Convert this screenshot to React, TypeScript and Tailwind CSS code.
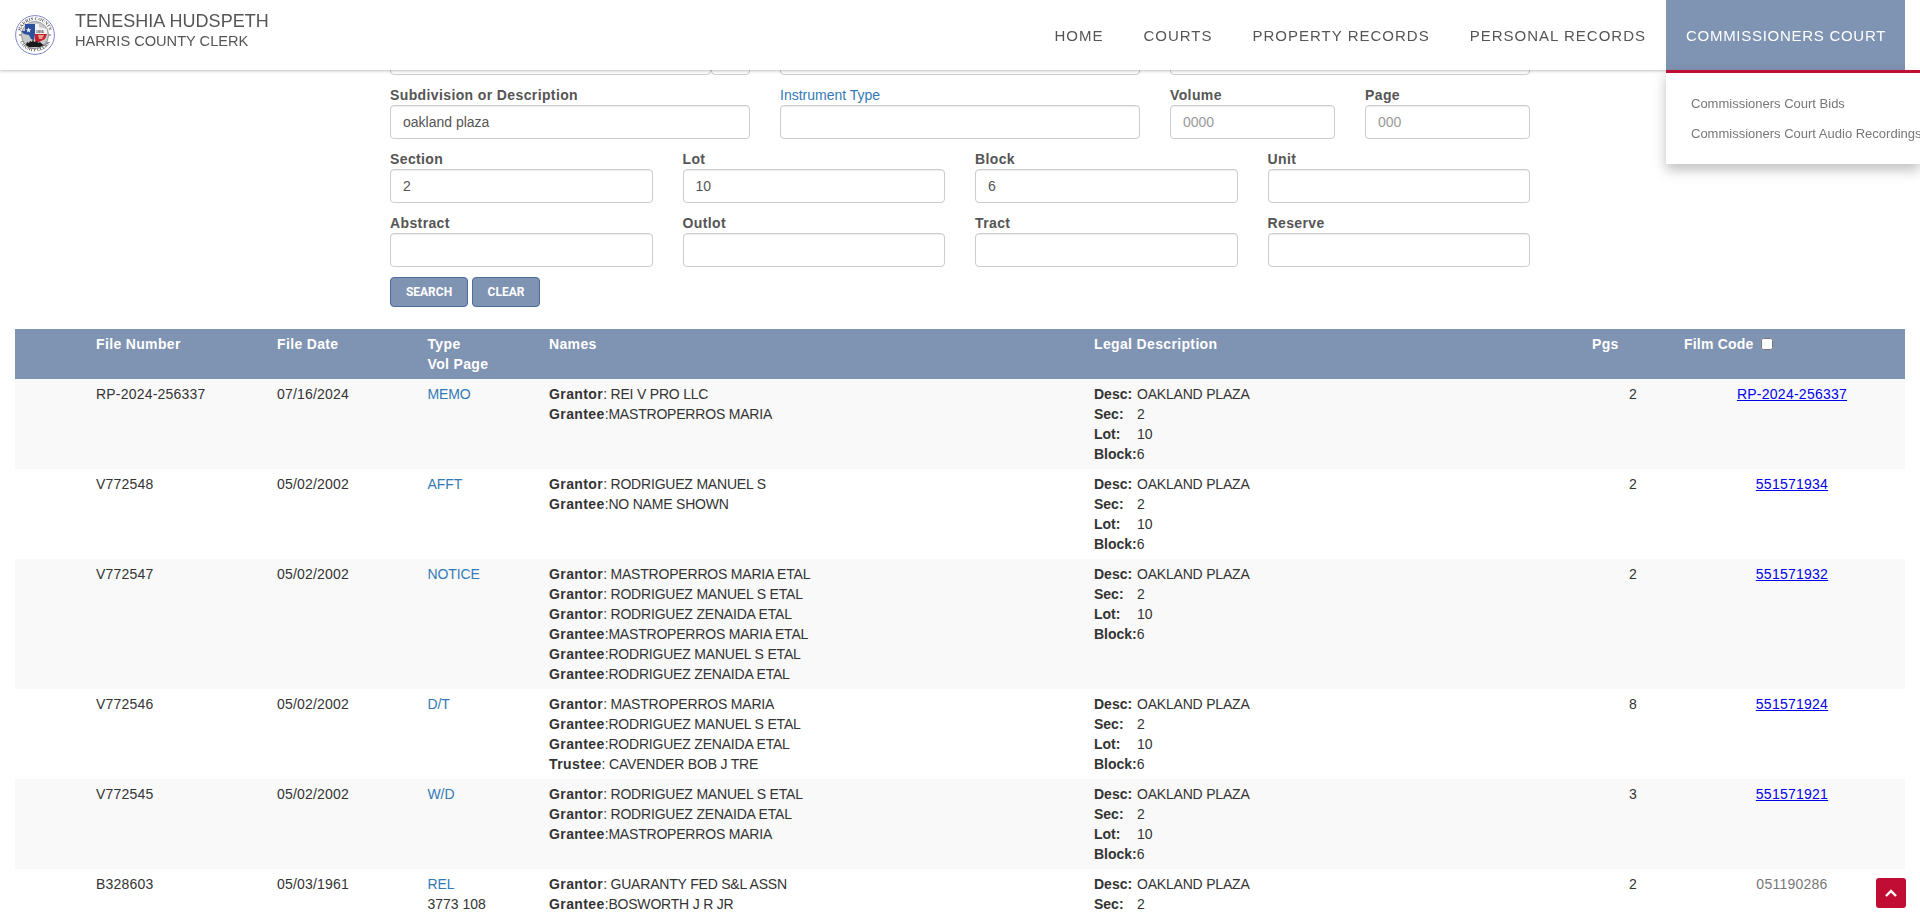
import React from "react";

type Party = [string, string];
type Row = {
  file: string;
  date: string;
  type: string;
  vol?: string;
  names: Party[];
  pgs: string;
  film: string;
  link: boolean;
};

const rows: Row[] = [
  { file: "RP-2024-256337", date: "07/16/2024", type: "MEMO", names: [["Grantor", ": REI V PRO LLC"], ["Grantee", ":MASTROPERROS MARIA"]], pgs: "2", film: "RP-2024-256337", link: true },
  { file: "V772548", date: "05/02/2002", type: "AFFT", names: [["Grantor", ": RODRIGUEZ MANUEL S"], ["Grantee", ":NO NAME SHOWN"]], pgs: "2", film: "551571934", link: true },
  { file: "V772547", date: "05/02/2002", type: "NOTICE", names: [["Grantor", ": MASTROPERROS MARIA ETAL"], ["Grantor", ": RODRIGUEZ MANUEL S ETAL"], ["Grantor", ": RODRIGUEZ ZENAIDA ETAL"], ["Grantee", ":MASTROPERROS MARIA ETAL"], ["Grantee", ":RODRIGUEZ MANUEL S ETAL"], ["Grantee", ":RODRIGUEZ ZENAIDA ETAL"]], pgs: "2", film: "551571932", link: true },
  { file: "V772546", date: "05/02/2002", type: "D/T", names: [["Grantor", ": MASTROPERROS MARIA"], ["Grantee", ":RODRIGUEZ MANUEL S ETAL"], ["Grantee", ":RODRIGUEZ ZENAIDA ETAL"], ["Trustee", ": CAVENDER BOB J TRE"]], pgs: "8", film: "551571924", link: true },
  { file: "V772545", date: "05/02/2002", type: "W/D", names: [["Grantor", ": RODRIGUEZ MANUEL S ETAL"], ["Grantor", ": RODRIGUEZ ZENAIDA ETAL"], ["Grantee", ":MASTROPERROS MARIA"]], pgs: "3", film: "551571921", link: true },
  { file: "B328603", date: "05/03/1961", type: "REL", vol: "3773 108", names: [["Grantor", ": GUARANTY FED S&L ASSN"], ["Grantee", ":BOSWORTH J R JR"]], pgs: "2", film: "051190286", link: false },
];

function Seal() {
  return (
    <svg viewBox="0 0 40 40" className="w-10 h-10 shrink-0">
      <defs>
        <path id="sealTop" d="M5 20a15 15 0 0 1 30 0" />
        <path id="sealBottom" d="M3.6 20a16.4 16.4 0 0 0 32.8 0" />
      </defs>
      <circle cx="20" cy="20" r="19.4" fill="#fff" stroke="#7d88c9" strokeWidth="1" />
      <circle cx="20" cy="20" r="13.6" fill="#c9c9cb" stroke="#55565e" strokeWidth="0.5" />
      <text fontSize="4.4" fontWeight="700" fill="#444" fontFamily="'Liberation Serif', serif" letterSpacing="0.1">
        <textPath href="#sealTop" startOffset="50%" textAnchor="middle">HARRIS COUNTY</textPath>
      </text>
      <text fontSize="4.4" fontWeight="700" fill="#444" fontFamily="'Liberation Serif', serif" letterSpacing="0.1">
        <textPath href="#sealBottom" startOffset="50%" textAnchor="middle">COUNTY CLERK</textPath>
      </text>
      <path d="M10 9h10v10l-1 6-3-1-2-4-5-1-3-3 4 0z" fill="#2c4f9e" />
      <path d="M13.6 12.4l.7 1.9h2l-1.6 1.2.6 1.9-1.7-1.2-1.7 1.2.6-1.9-1.6-1.2h2z" fill="#fff" />
      <path d="M20 9h4v3l8 2v5H20z" fill="#f2f2f2" />
      <path d="M20 19h12l-2 5-6 3-3 1-1-3z" fill="#c8202e" />
      <path d="M23 20l6 0-2 4-3 0z" fill="#e0a08a" />
      <text x="21" y="18.4" fontSize="3.8" fontWeight="700" fill="#333" fontFamily="'Liberation Serif', serif">1836</text>
      <path d="M11 30l1-3 2 1 1-2 2 1 1-3 1 3 3-1 1 2 2-1 2 2 2 1-4 2H14z" fill="#1b1b1b" />
      <circle cx="5" cy="20" r="0.9" fill="#888" />
      <circle cx="35" cy="20" r="0.9" fill="#888" />
    </svg>
  );
}

function Field({ label, value, placeholder, width, blue }: { label?: string; value?: string; placeholder?: string; width: string; blue?: boolean }) {
  return (
    <div className={width}>
      {label ? (
        <label className={blue ? "block h-5 leading-5 text-[#337ab7]" : "block h-5 leading-5 font-bold tracking-[0.38px] text-[#555]"}>{label}</label>
      ) : null}
      <input
        defaultValue={value}
        placeholder={placeholder}
        className="block w-full h-[34px] px-3 bg-white border border-[#ccc] rounded-[4px] text-sm text-[#555] placeholder:text-[#999] shadow-[inset_0_1px_1px_rgba(0,0,0,0.075)] outline-none"
      />
    </div>
  );
}

function Legal() {
  return (
    <td className="p-[5px] align-top">
      <div><b className="inline-block w-[43px] font-bold">Desc:</b><span className="tracking-[-0.2px]">OAKLAND PLAZA</span></div>
      <div><b className="inline-block w-[43px] font-bold">Sec:</b>2</div>
      <div><b className="inline-block w-[43px] font-bold">Lot:</b>10</div>
      <div><b className="font-bold">Block:</b>6</div>
    </td>
  );
}

export default function App() {
  return (
    <div className="h-screen overflow-hidden bg-white text-sm leading-5 text-[#333] [font-family:'Liberation_Sans',Arial,sans-serif]">
      <header className="fixed top-0 left-0 right-0 z-20 h-[70px] bg-white shadow-[0_1px_3px_rgba(0,0,0,0.25)] flex items-start justify-between pl-[15px] pr-[15px]">
        <div className="flex items-center h-[70px]">
          <Seal />
          <div className="ml-5 pb-2 text-[#555] uppercase">
            <div className="text-[18px] leading-[21px] tracking-[0.05px]">Teneshia Hudspeth</div>
            <div className="text-[14.6px] leading-[19px]">Harris County Clerk</div>
          </div>
        </div>
        <nav className="flex h-[70px] text-[15px] tracking-[1px] text-[#555]">
          <a className="px-5 leading-[72px]">HOME</a>
          <a className="px-5 leading-[72px]">COURTS</a>
          <a className="px-5 leading-[72px]">PROPERTY RECORDS</a>
          <a className="px-5 leading-[72px]">PERSONAL RECORDS</a>
          <div className="relative w-[239px]">
            <a className="block h-[70px] pl-5 leading-[72px] bg-[#7f93b2] text-white whitespace-nowrap tracking-[0.72px]">COMMISSIONERS COURT</a>
            <div className="absolute top-[70px] left-0 w-[254px] h-[94px] overflow-hidden bg-white border-t-[3px] border-[#c10d33] shadow-[0_6px_12px_rgba(0,0,0,0.25)] pt-4 pl-[25px] text-[13px] tracking-normal text-[#777] whitespace-nowrap">
              <div className="leading-[30px]">Commissioners Court Bids</div>
              <div className="leading-[30px]">Commissioners Court Audio Recordings</div>
            </div>
          </div>
        </nav>
      </header>

      <main className="pt-[41px]">
        <form className="w-[1170px] mx-auto px-[15px] flex flex-col gap-[10px]">
          <div className="flex gap-[30px]">
            <div className="flex w-[360px]">
              <Field width="w-[321px]" />
              <Field width="w-[39px]" />
            </div>
            <Field width="w-[360px]" />
            <Field width="w-[360px]" />
          </div>
          <div className="flex gap-[30px]">
            <Field width="w-[360px]" label="Subdivision or Description" value="oakland plaza" />
            <Field width="w-[360px]" label="Instrument Type" blue />
            <Field width="w-[165px]" label="Volume" placeholder="0000" />
            <Field width="w-[165px]" label="Page" placeholder="000" />
          </div>
          <div className="flex gap-[30px]">
            <Field width="w-[262.5px]" label="Section" value="2" />
            <Field width="w-[262.5px]" label="Lot" value="10" />
            <Field width="w-[262.5px]" label="Block" value="6" />
            <Field width="w-[262.5px]" label="Unit" />
          </div>
          <div className="flex gap-[30px]">
            <Field width="w-[262.5px]" label="Abstract" />
            <Field width="w-[262.5px]" label="Outlot" />
            <Field width="w-[262.5px]" label="Tract" />
            <Field width="w-[262.5px]" label="Reserve" />
          </div>
          <div className="flex gap-[4px]">
            <button type="button" className="h-[30px] w-[78px] bg-[#7f93b2] border border-[#4f6d9a] rounded-[4px] text-white text-xs font-bold [font-family:Roboto,sans-serif]">SEARCH</button>
            <button type="button" className="h-[30px] w-[68px] bg-[#7f93b2] border border-[#4f6d9a] rounded-[4px] text-white text-xs font-bold [font-family:Roboto,sans-serif]">CLEAR</button>
          </div>
        </form>

        <div className="mt-[22px] px-[15px]">
          <table className="w-full table-fixed border-collapse">
            <colgroup>
              <col className="w-[76px]" />
              <col className="w-[181px]" />
              <col className="w-[151px]" />
              <col className="w-[121px]" />
              <col className="w-[545px]" />
              <col className="w-[498px]" />
              <col className="w-[92px]" />
              <col />
            </colgroup>
            <thead>
              <tr className="bg-[#7f93b2] text-white font-bold text-left tracking-[0.35px]">
                <th className="p-[5px] align-top font-bold"></th>
                <th className="p-[5px] align-top font-bold">File Number</th>
                <th className="p-[5px] align-top font-bold">File Date</th>
                <th className="py-[5px] pl-[4.5px] pr-[5px] align-top font-bold">Type<br />Vol Page</th>
                <th className="p-[5px] align-top font-bold">Names</th>
                <th className="p-[5px] align-top font-bold">Legal Description</th>
                <th className="p-[5px] align-top font-bold">Pgs</th>
                <th className="p-[5px] align-top font-bold">
                  <span className="inline-flex items-center gap-[8px] tracking-[0.2px]">
                    Film Code
                    <input type="checkbox" className="w-[12px] h-[12px] m-0" />
                  </span>
                </th>
              </tr>
            </thead>
            <tbody>
              {rows.map((r, i) => (
                <tr key={r.file} className={i % 2 === 0 ? "bg-[#f9f9f9]" : "bg-white"}>
                  <td className="p-[5px]"></td>
                  <td className="p-[5px] align-top tracking-[0.2px]">{r.file}</td>
                  <td className="p-[5px] align-top tracking-[0.2px]">{r.date}</td>
                  <td className="py-[5px] pl-[4.5px] pr-[5px] align-top">
                    <div className="text-[#337ab7] tracking-[-0.1px]">{r.type}</div>
                    {r.vol ? <div>{r.vol}</div> : null}
                  </td>
                  <td className="p-[5px] align-top">
                    {r.names.map((n, k) => (
                      <div key={k}>
                        <b className="font-bold tracking-[0.4px]">{n[0]}</b>
                        <span className="tracking-[-0.2px]">{n[1]}</span>
                      </div>
                    ))}
                  </td>
                  <Legal />
                  <td className="py-[5px] pl-[42px] align-top">{r.pgs}</td>
                  <td className="p-[5px] align-top text-center tracking-[0.25px]">
                    {r.link ? (
                      <a className="text-[#0000ee] underline">{r.film}</a>
                    ) : (
                      <span className="text-[#777]">{r.film}</span>
                    )}
                  </td>
                </tr>
              ))}
            </tbody>
          </table>
        </div>
      </main>

      <button type="button" className="fixed z-30 left-[1876px] top-[878px] w-[30px] h-[30px] rounded-[3px] bg-[#c10d33] flex items-center justify-center">
        <svg viewBox="0 0 12 8" className="w-3 h-2 fill-none stroke-white stroke-[2.4]">
          <polyline points="1,7 6,2 11,7" />
        </svg>
      </button>
    </div>
  );
}
